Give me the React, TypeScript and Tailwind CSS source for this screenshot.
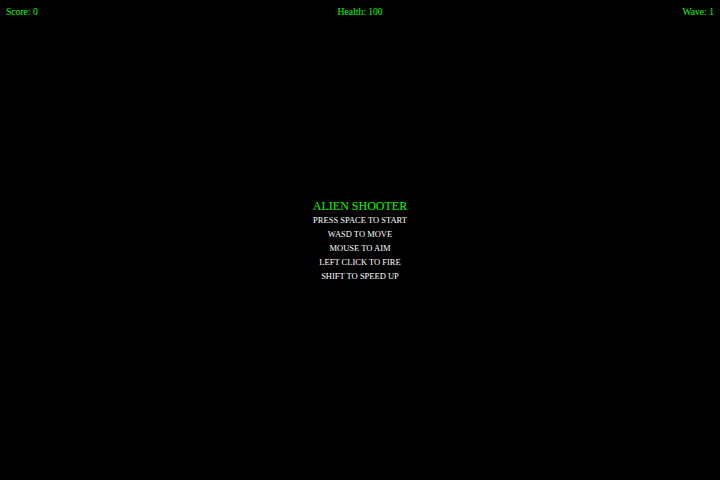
import React from 'react';

const HELP = ['PRESS SPACE TO START', 'WASD TO MOVE', 'MOUSE TO AIM', 'LEFT CLICK TO FIRE', 'SHIFT TO SPEED UP'];

export default function App() {
  return (
    <div className="w-[720px] h-[480px] bg-black overflow-hidden flex flex-col" style={{ fontFamily: '"Liberation Serif", serif' }}>
      {/* HUD */}
      <div className="flex justify-between px-[6px] pt-[6px] text-[9.6px] leading-[12px] text-[#00ff00]">
        <span>Score: 0</span>
        <span>Health: 100</span>
        <span>Wave: 1</span>
      </div>

      {/* Start screen */}
      <div className="mt-[181px] flex flex-col items-center">
        <div className="text-[12px] leading-[14px] text-[#00ff00]">ALIEN SHOOTER</div>
        {HELP.map(line => (
          <div key={line} className="text-[8.5px] leading-[14px] text-white">{line}</div>
        ))}
      </div>
    </div>
  );
}
